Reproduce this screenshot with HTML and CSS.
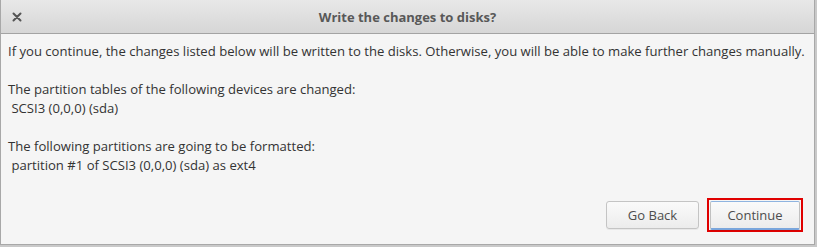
FILE: index.html
```html
<!DOCTYPE html>
<html>
<head>
<meta charset="utf-8">
<link rel="stylesheet" href="styles.css">
</head>
<body>
<div class="window">
  <div class="titlebar">
    <span class="close">
      <svg width="10" height="10" viewBox="0 0 10 10"><path d="M1.5 1.5 L8.5 8.5 M8.5 1.5 L1.5 8.5" stroke="#555" stroke-width="2" stroke-linecap="round"/></svg>
    </span>
    <span class="title">Write the changes to disks?</span>
  </div>
  <div class="content">
    <p class="line">If you continue, the changes listed below will be written to the disks. Otherwise, you will be able to make further changes manually.</p>
    <p class="block">The partition tables of the following devices are changed:<br>&nbsp;SCSI3 (0,0,0) (sda)</p>
    <p class="block">The following partitions are going to be formatted:<br>&nbsp;partition #1 of SCSI3 (0,0,0) (sda) as ext4</p>
  </div>
  <div class="actions">
    <button class="btn">Go Back</button>
    <span class="focus"><button class="btn primary">Continue</button></span>
  </div>
</div>
</body>
</html>
```

FILE: styles.css
```css
html, body {
  margin: 0;
  padding: 0;
  background: #c9c9c9;
}
body {
  width: 817px;
  height: 247px;
  overflow: hidden;
  font-family: "Open Sans", "Noto Sans", sans-serif;
  font-size: 13.1px;
  color: #333;
}
.window {
  box-sizing: border-box;
  width: 815px;
  height: 245px;
  background: #f5f5f5;
  border: 1px solid #a8a8a8;
  border-top: none;
  display: flex;
  flex-direction: column;
}
.titlebar {
  height: 34px;
  box-sizing: border-box;
  border-bottom: 1px solid #a3a3a3;
  background: linear-gradient(#e8e8e8, #d6d6d6);
  display: flex;
  align-items: center;
  justify-content: center;
  position: relative;
}
.close {
  position: absolute;
  left: 11px;
  top: 12px;
  width: 10px;
  height: 10px;
  display: flex;
}
.title {
  font-weight: bold;
  color: #585858;
  font-size: 13px;
}
.content {
  padding: 8px 7px 0 7px;
  flex: 1;
}
.content p {
  margin: 0;
  line-height: 19px;
}
.content .block {
  margin-top: 19px;
}
.actions {
  display: flex;
  justify-content: flex-end;
  align-items: center;
  gap: 8px;
  padding: 0 11px 12px 0;
}
.btn {
  font-family: "Open Sans", "Noto Sans", sans-serif;
  font-size: 13px;
  color: #4d4d4d;
  width: 93px;
  height: 28px;
  border: 1px solid #c4c4c4;
  border-radius: 3px;
  background: linear-gradient(#fafafa, #ececec);
  box-shadow: 0 1px 0 rgba(0,0,0,0.05);
  padding: 0;
}
.focus {
  display: flex;
  border: 2px solid #e00000;
  padding: 1px 1px 0 1px;
}
.btn.primary {
  border-color: #c0c0c0;
  border-top: 1px solid #8fb4e0;
  border-bottom: 2px solid #7aa6dc;
  height: 29px;
  width: 90px;
  border-radius: 2px;
}
```
